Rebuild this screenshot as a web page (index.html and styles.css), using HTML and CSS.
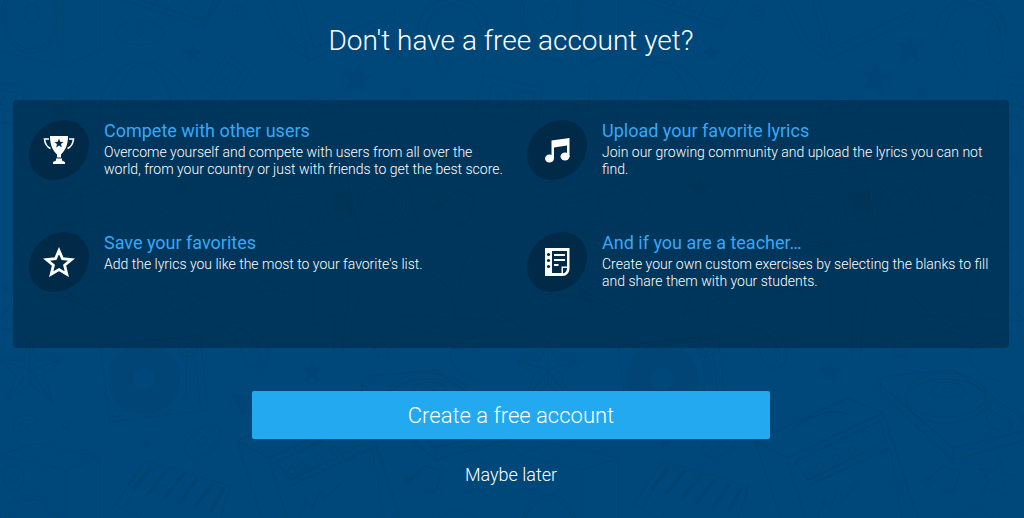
FILE: index.html
```html
<!DOCTYPE html>
<html lang="en">
<head>
    <meta charset="UTF-8">
    <meta name="viewport" content="width=device-width, initial-scale=1.0">
    <title>Create a free account</title>
    <link rel="stylesheet" href="styles.css">
</head>
<body>
    <main class="signup">
        <h1>Don't have a free account yet?</h1>

        <ul class="features">
            <li class="feature">
                <span class="feature-icon">
                    <svg width="32" height="30" viewBox="0 0 32 30" aria-hidden="true">
                        <path fill="#fff" fill-rule="evenodd" d="M7 1h18c0 9-2.500 14-7 18.500v3h-4v-3C9.500 15 7 10 7 1zM16 3.500l-1.200 3.200-3.400.2 2.600 2.200-.8 3.300 2.800-1.800 2.800 1.800-.8-3.300 2.600-2.200-3.400-.2z"/>
                        <path fill="#fff" d="M13 23.500h6v2l3 1.500v2H10v-2l3-1.500z"/>
                        <path fill="none" stroke="#fff" stroke-width="1.600" d="M6 4H1.500c.5 4.500 2.500 8 6 9.500M26 4h4.500c-.5 4.500-2.500 8-6 9.500"/>
                    </svg>
                </span>
                <div class="feature-text">
                    <h2>Compete with other users</h2>
                    <p>Overcome yourself and compete with users from all over the world, from your country or just with friends to get the best score.</p>
                </div>
            </li>
            <li class="feature">
                <span class="feature-icon">
                    <svg width="32" height="30" viewBox="0 0 32 30" aria-hidden="true">
                        <path fill="#fff" d="M10.500 5.500L28.500 3v19h-2.500V10.500L13 12.500v11h-2.500z"/>
                        <ellipse fill="#fff" cx="8.500" cy="23.500" rx="4.500" ry="4"/>
                        <ellipse fill="#fff" cx="24" cy="21.500" rx="4.500" ry="4"/>
                    </svg>
                </span>
                <div class="feature-text">
                    <h2>Upload your favorite lyrics</h2>
                    <p>Join our growing community and upload the lyrics you can not find.</p>
                </div>
            </li>
            <li class="feature">
                <span class="feature-icon">
                    <svg width="32" height="30" viewBox="0 0 32 30" aria-hidden="true">
                        <path fill="none" stroke="#fff" stroke-width="2.800" d="M16 3.500l3.500 8.200 9 .8-6.900 5.800 2.200 8.900L16 22.600l-7.800 4.600 2.200-8.900-6.900-5.800 9-.8z"/>
                    </svg>
                </span>
                <div class="feature-text">
                    <h2>Save your favorites</h2>
                    <p>Add the lyrics you like the most to your favorite's list.</p>
                </div>
            </li>
            <li class="feature">
                <span class="feature-icon">
                    <svg width="32" height="30" viewBox="0 0 32 30" aria-hidden="true">
                        <path fill="#fff" fill-rule="evenodd" d="M4 1h24.500v20.500c0 4-3 7.500-7 7.500H4zM11 4v22h9.500v-6.500H26V4z"/>
                        <path fill="#002a47" d="M22 21h4c0 3-1.500 5-4 5.500z"/>
                        <path fill="#fff" d="M13 7h11v2H13zM13 12h11v2H13zM13 17h4.500v2H13z"/>
                        <circle fill="#002a47" cx="7.500" cy="7.500" r="1.600"/>
                        <circle fill="#002a47" cx="7.500" cy="13.500" r="1.600"/>
                        <circle fill="#002a47" cx="7.500" cy="19.500" r="1.600"/>
                    </svg>
                </span>
                <div class="feature-text">
                    <h2>And if you are a teacher…</h2>
                    <p>Create your own custom exercises by selecting the blanks to fill and share them with your students.</p>
                </div>
            </li>
        </ul>

        <button type="button" class="create-btn">Create a free account</button>
        <a href="#" class="later">Maybe later</a>
    </main>
</body>
</html>
```
FILE: styles.css
```css
body {
    margin: 0;
    font-family: Roboto, sans-serif;
    color: #fff;
    background-color: #004879;
    /* music doodles, tiled */
    background-image: url("data:image/svg+xml,%3Csvg xmlns='http://www.w3.org/2000/svg' width='518' height='518'%3E%3Cdefs%3E%3Cpath id='s' d='M0-10L2.500-3 10-3 4 2 6 9 0 5-6 9-4 2-10-3-2.500-3z'/%3E%3C/defs%3E%3Cg fill='none' stroke='%23003a60' stroke-opacity='.26' stroke-width='1.500' stroke-linejoin='round'%3E\
%3Cpath d='M0 50L63 67 100 50V0M63 67V0M0 455L35 443 100 458V518M0 455L65 470 100 458M65 470V518'/%3E%3Cellipse cx='31' cy='15' rx='29' ry='38'/%3E%3Cellipse cx='31' cy='15' rx='26' ry='34'/%3E%3Cellipse cx='32' cy='14' rx='7' ry='10'/%3E%3Cellipse cx='31' cy='533' rx='29' ry='38'/%3E%3Cellipse cx='31' cy='533' rx='26' ry='34'/%3E%3Cellipse cx='14' cy='478' rx='10' ry='12'/%3E%3Ccircle cx='14' cy='478' r='4'/%3E\
%3Cpath d='M123 0L203 27 220 0M140 0L204 21 215 0M150 8l8-8M165 13l8-13M180 18l10-18M115 505L145 461 231 486 220 518M115 505L140 518M125 508L150 463'/%3E%3Cpath stroke-width='4' d='M133 490l18-22M148 494l20-25M163 500l22-28M178 504l20-26M194 508l18-24M210 512l14-24'/%3E\
%3Cellipse cx='140' cy='33' rx='24' ry='12'/%3E%3Cellipse cx='140' cy='33' rx='3' ry='2'/%3E%3Ccircle cx='239' cy='13' r='7'/%3E%3Ccircle cx='239' cy='13' r='3'/%3E\
%3Cpath d='M100 120C98 85 118 62 143 62S190 85 190 115M116 110C118 85 128 66 143 62M172 112C170 84 158 66 143 62M100 110Q143 95 190 113M227 55L250 71 228 105 203 88zM228 62L242 72 234 84 219 74z'/%3E%3Ccircle cx='221' cy='88' r='6'/%3E\
%3Cpath d='M263 0L283 43 310 60 395 20V8M295 0L309 60M301 0L314 48 392 12M270 0L289 38 308 50'/%3E\
%3Cpath stroke-width='2' d='M418 32C420 8 435-1 453-1S488 10 488 35M425 38C427 14 439 5 453 5S482 16 482 38'/%3E%3Cellipse cx='442' cy='57' rx='7' ry='17' transform='rotate(-14 442 57)'/%3E%3Cellipse cx='477' cy='47' rx='7' ry='17' transform='rotate(-14 477 47)'/%3E\
%3Cpath d='M483 75L543 88 537 126 475 112zM492 84L535 93 531 112 488 103zM-35 75L25 88 19 126-43 112zM-26 84L17 93 13 112-30 103z'/%3E%3Ccircle cx='502' cy='98' r='4'/%3E%3Ccircle cx='3' cy='101' r='4'/%3E\
%3Cpath d='M71 112V84q10 4 7 14M300 120C296 98 320 95 337 101S334 118 318 112 306 128 300 120zM308 116Q310 104 330 106M250 118l14-8M225 118q20-10 14 8t-18 8 4-16'/%3E\
%3Cpath d='M257 147L395 127 419 230 275 252zM262 172L405 150M265 178L407 156M320 175L346 170 360 238M346 195L325 199 330 222 352 218zM268 162L390 143M283 172l14-2M300 168l14-2M350 160l14-2M322 176l4 14M330 174l4 14M338 172l4 14'/%3E%3Ccircle cx='297' cy='220' r='26'/%3E%3Ccircle cx='297' cy='220' r='22'/%3E%3Ccircle cx='297' cy='220' r='14'/%3E%3Ccircle cx='382' cy='203' r='24'/%3E%3Ccircle cx='382' cy='203' r='20'/%3E%3Ccircle cx='382' cy='203' r='12'/%3E\
%3Cpath d='M37 200L115 180 133 205 115 222 50 235zM44 205L120 188M48 228L112 214M80 192L84 228M143 235L161 212 207 243M222 232C236 222 240 196 226 196S222 222 236 236M433 106C440 130 455 140 480 150S500 165 495 178M443 120L470 145 455 150z'/%3E%3Ccircle cx='34' cy='219' r='5'/%3E%3Ccircle cx='22' cy='202' r='6'/%3E%3Ccircle cx='23' cy='240' r='6'/%3E\
%3Cpath stroke-width='2' d='M439 207L457 190 476 197 468 222M409 480L425 466 442 471 436 491'/%3E\
%3Cellipse cx='48' cy='307' rx='25' ry='12'/%3E%3Cellipse cx='48' cy='307' rx='5' ry='2'/%3E%3Cpath d='M62 290L100 272 133 290 100 309zM62 290V295L100 314 133 295'/%3E%3Cellipse cx='100' cy='288' rx='18' ry='8'/%3E\
%3Cpath d='M218 326C240 316 266 330 268 352S248 372 244 358 232 330 218 326zM228 326C246 328 258 340 259 362M238 326C252 332 262 346 262 360M254 290C262 276 284 280 286 294 276 284 264 296 254 290zM313 275V326L334 315V355M350 275L342 355M362 291L350 330M496 250C470 238 465 262 460 275S466 295 452 290'/%3E\
%3Cpath d='M390 291C410 315 430 330 445 328S460 285 430 275M398 318C410 310 450 322 518 320M398 318C400 340 450 320 453 350 500 340 500 330 480 335 440 345 440 370 485 382M518 285C495 288 490 310 505 318S530 340 512 338M0 285Q20 295 5 312T12 330'/%3E\
%3Cpath d='M30 338L37 360 62 360 43 375 53 402 30 384 7 402 16 375-2 360 23 360zM30 338V384M62 360L30 370M53 402L30 370M7 402L30 370M-2 360L30 370'/%3E\
%3Cpath stroke-width='2' d='M100 346L200 335 208 410 110 422zM189 350C182 370 190 380 184 400M196 360L200 404'/%3E%3Ccircle cx='188' cy='348' r='9'/%3E%3Ccircle cx='188' cy='348' r='4'/%3E%3Ccircle cx='144' cy='379' r='35'/%3E%3Ccircle cx='116' cy='413' r='4'/%3E\
%3Cpath d='M13 428C12 414 30 412 40 420 28 420 28 434 13 432zM18 428q4-9 14-8'/%3E%3Ccircle cx='66' cy='425' r='3'/%3E%3Cellipse cx='203' cy='441' rx='21' ry='12' transform='rotate(-38 203 441)'/%3E%3Cellipse cx='203' cy='441' rx='5' ry='3' transform='rotate(-38 203 441)'/%3E\
%3Cpath stroke-width='2' d='M237 441L329 398 365 413 400 518M237 441L269 458 365 413M269 458L287 518M237 441L262 518M277 462L362 421 368 441 290 480zM290 486L372 448 384 518M275 430C290 415 315 408 330 414M300 518l6-18 6 8 8-18 4 10 16-16'/%3E%3Cg%3E%3Ccircle cx='292' cy='471' r='4'/%3E%3Ccircle cx='302' cy='467' r='4'/%3E%3Ccircle cx='318' cy='459' r='4'/%3E%3Ccircle cx='334' cy='451' r='4'/%3E%3Ccircle cx='348' cy='435' r='4'/%3E%3C/g%3E\
%3Cpath stroke-width='2' d='M362 381Q362 378 370 376L435 370 518 427M362 381V392L435 460 518 437M435 460V448L518 428M362 384L435 448M468 408L490 420Q500 430 485 430T468 415'/%3E%3Cellipse cx='428' cy='395' rx='40' ry='22'/%3E%3Cellipse cx='428' cy='401' rx='40' ry='22'/%3E%3Cellipse cx='430' cy='390' rx='16' ry='8'/%3E%3Cellipse cx='430' cy='390' rx='4' ry='2'/%3E%3Cpath d='M435 526C440 508 465 506 475 518'/%3E\
%3Cuse href='%23s' transform='translate(182 298) rotate(12) scale(2.200)' stroke-width='.8'/%3E%3Cuse href='%23s' transform='translate(383 350)'/%3E%3Cuse href='%23s' transform='translate(479 478) rotate(10) scale(1.900)' stroke-width='.8'/%3E%3C/g%3E\
%3Cg fill='%23003a60' fill-opacity='.16'%3E%3Ccircle cx='144' cy='379' r='34'/%3E%3Ccircle cx='58' cy='110' r='7'/%3E%3Cellipse cx='439' cy='207' rx='6' ry='5'/%3E%3Cellipse cx='461' cy='222' rx='6' ry='5'/%3E%3Cellipse cx='409' cy='480' rx='6' ry='4'/%3E%3Cellipse cx='429' cy='491' rx='6' ry='4'/%3E%3Cpath d='M330 192l20-4 5 22-20 4zM230 392l22 4-6 8 4 8-8 4z'/%3E%3Cuse href='%23s' transform='translate(193 53)'/%3E%3Cuse href='%23s' transform='translate(392 48) scale(1.500)'/%3E%3Cuse href='%23s' transform='translate(357 78) rotate(10) scale(1.700)'/%3E%3Cuse href='%23s' transform='translate(405 92) scale(.8)'/%3E%3Cuse href='%23s' transform='translate(182 187) scale(1.300)'/%3E%3Cuse href='%23s' transform='translate(147 443) scale(.7)'/%3E%3Cuse href='%23s' transform='translate(312 371) scale(1.200)'/%3E%3C/g%3E%3Ccircle cx='144' cy='379' r='11' fill='%23004879'/%3E%3C/svg%3E");
}
.signup {
    display: flex;
    flex-direction: column;
    align-items: center;
    padding: 24px 15px 28px 13px;
}
h1 {
    margin: 0 0 42px;
    font-size: 28px;
    font-weight: 300;
    line-height: 34px;
}
.features {
    display: grid;
    grid-template-columns: 1fr 1fr;
    width: 100%;
    margin: 0 0 43px;
    padding: 8px 0 16px;
    list-style: none;
    border-radius: 4px;
    box-sizing: border-box;
    background-color: rgba(0,0,0,0.24);
}
.feature {
    display: flex;
    gap: 15px;
    min-height: 112px;
    padding: 12px 8px 12px 16px;
    box-sizing: border-box;
}
.feature-icon {
    display: flex;
    flex: none;
    align-items: center;
    justify-content: center;
    width: 60px;
    height: 60px;
    border-radius: 60% 40%;
    background-color: #002a47;
}
h2 {
    margin: 0;
    font-size: 18px;
    font-weight: 400;
    line-height: 22px;
    color: #36a9f7;
}
.feature p {
    margin: 2px 0 0;
    font-size: 14px;
    font-weight: 300;
    line-height: 17px;
}
.create-btn {
    width: 52%;
    height: 48px;
    margin: 0 0 24px;
    padding: 0;
    border: 0;
    border-radius: 2px;
    font-family: inherit;
    font-size: 22px;
    font-weight: 300;
    color: #fff;
    background-color: #22a9ef;
    cursor: pointer;
}
.create-btn:hover {
    background-color: #1b9be0;
}
.later {
    font-size: 18px;
    font-weight: 300;
    line-height: 24px;
    color: #fff;
    text-decoration: none;
}
```
